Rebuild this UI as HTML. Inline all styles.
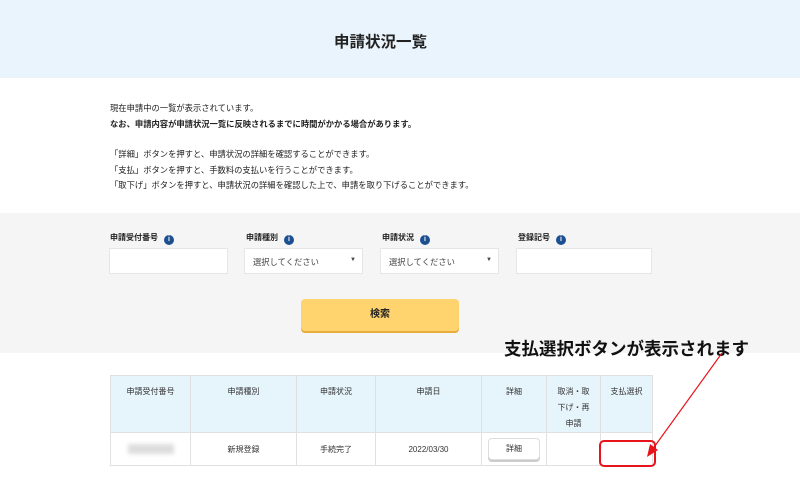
<!DOCTYPE html>
<html><head><meta charset="utf-8"><style>
*{margin:0;padding:0;box-sizing:border-box}
body{width:800px;height:478px;overflow:hidden;background:#fff;font-family:"Liberation Sans","Noto Sans CJK JP",sans-serif;color:#222;position:relative}
.hd{position:absolute;left:0;top:0;width:800px;height:78px;background:#e9f4fc}
.hd h1{position:absolute;top:30px;left:334px;font-size:15.5px;font-weight:bold;white-space:nowrap}
.t{position:absolute;left:110px;font-size:8.3px;white-space:nowrap}
.gray{position:absolute;left:0;top:213px;width:800px;height:140px;background:#f5f5f5}
.lb{position:absolute;top:232px;font-size:8px;font-weight:bold}
.lb i{display:inline-block;width:10px;height:10px;border-radius:50%;background:#1d4f91;color:#fff;font-size:7px;font-style:normal;text-align:center;line-height:10px;margin-left:6px;vertical-align:-1px}
.in{position:absolute;top:248px;width:119px;height:26px;background:#fff;border:1px solid #e6e6e6;font-size:8.3px;color:#444;padding:7px 8px}
.in span{position:absolute;right:6px;top:8px;font-size:6px}
.btn{position:absolute;left:301px;top:299px;width:158px;height:32px;background:#ffd36e;border-radius:4px;box-shadow:0 2px 0 #e8ad3a;text-align:center;line-height:32px;font-size:10px;font-weight:bold}
table{position:absolute;left:110px;top:375px;border-collapse:collapse;font-size:8px;color:#333}
td,th{border:1px solid #e0e0e0;text-align:center}
th{background:#e6f4fc;font-weight:normal;height:57px;vertical-align:top;padding-top:8px;line-height:16px}
td{height:33px}
.note{position:absolute;left:504px;top:336px;font-size:17.5px;font-weight:bold;color:#111;white-space:nowrap}
</style></head><body>
<div class="hd"><h1>申請状況一覧</h1></div>
<div class="t" style="top:102px">現在申請中の一覧が表示されています。</div>
<div class="t" style="top:118px;font-weight:bold">なお、申請内容が申請状況一覧に反映されるまでに時間がかかる場合があります。</div>
<div class="t" style="top:148px">「詳細」ボタンを押すと、申請状況の詳細を確認することができます。</div>
<div class="t" style="top:164px">「支払」ボタンを押すと、手数料の支払いを行うことができます。</div>
<div class="t" style="top:179px">「取下げ」ボタンを押すと、申請状況の詳細を確認した上で、申請を取り下げることができます。</div>
<div class="gray"></div>
<div class="lb" style="left:110px">申請受付番号<i>i</i></div>
<div class="lb" style="left:246px">申請種別<i>i</i></div>
<div class="lb" style="left:382px">申請状況<i>i</i></div>
<div class="lb" style="left:518px">登録記号<i>i</i></div>
<div class="in" style="left:109px"></div>
<div class="in" style="left:244px">選択してください<span>▼</span></div>
<div class="in" style="left:380px">選択してください<span>▼</span></div>
<div class="in" style="left:516px;width:136px"></div>
<div class="btn">検索</div>
<div class="note">支払選択ボタンが表示されます</div>
<table>
<tr><th style="width:80px">申請受付番号</th><th style="width:106px">申請種別</th><th style="width:79px">申請状況</th><th style="width:106px">申請日</th><th style="width:65px">詳細</th><th style="width:54px">取消・取<br>下げ・再<br>申請</th><th style="width:52px">支払選択</th></tr>
<tr><td><div style="width:46px;height:10px;background:#ddd;margin:0 auto;filter:blur(2px)"></div></td><td>新規登録</td><td>手続完了</td><td>2022/03/30</td><td><div style="width:52px;height:22px;margin:0 auto;border:1px solid #ddd;border-radius:4px;box-shadow:0 2px 0 #ccc;line-height:20px;background:#fff">詳細</div></td><td></td><td></td></tr>
</table>
<svg style="position:absolute;left:0;top:0" width="800" height="478"><rect x="600" y="441" width="55" height="25" rx="4" fill="none" stroke="#e8141b" stroke-width="2"/><line x1="722" y1="353" x2="652" y2="450" stroke="#e8141b" stroke-width="1.2"/><polygon points="647,457 650,444 658,450" fill="#e8141b"/></svg>
</body></html>
